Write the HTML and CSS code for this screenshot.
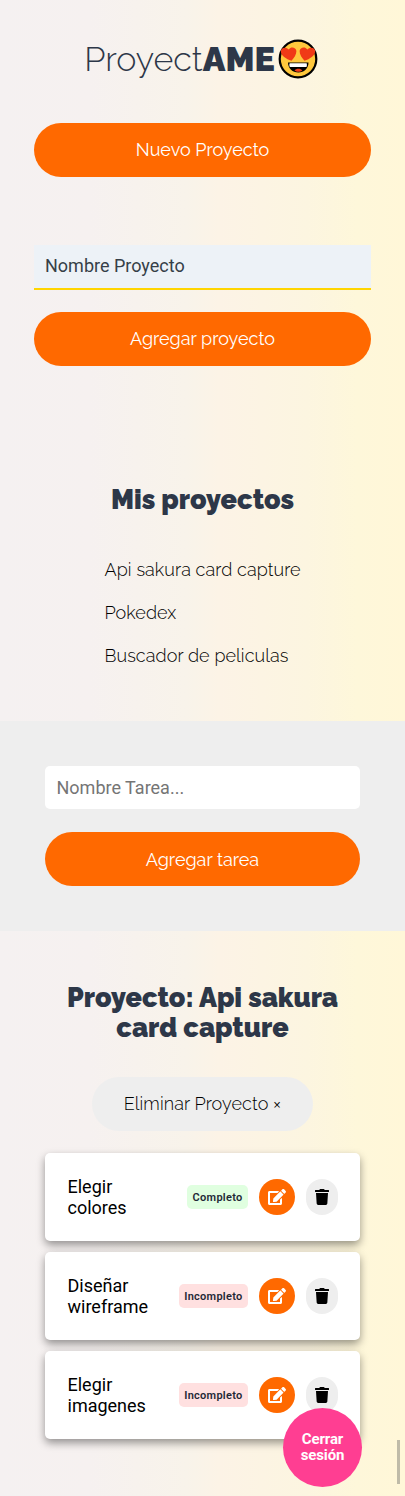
FILE: index.html
```
<!DOCTYPE html>
<html lang="es">
<head>
<meta charset="utf-8">
<title>ProyectAME</title>
<link rel="stylesheet" href="styles.css">
</head>
<body>
<svg class="defs" width="0" height="0" aria-hidden="true">
  <symbol id="edit" viewBox="0 0 576 512"><path d="M402.600 83.200l90.200 90.200c3.800 3.800 3.800 10 0 13.800L274.400 405.600l-92.800 10.300c-12.400 1.400-22.900-9.100-21.500-21.500l10.300-92.800L388.800 83.200c3.800-3.800 10-3.800 13.800 0zm162-22.900l-48.800-48.800c-15.200-15.200-39.900-15.200-55.200 0l-35.400 35.400c-3.800 3.800-3.800 10 0 13.800l90.200 90.200c3.800 3.800 10 3.800 13.800 0l35.400-35.400c15.200-15.300 15.200-40 0-55.200zM384 346.200V448H64V128h229.800c3.200 0 6.200-1.300 8.500-3.500l40-40c7.600-7.600 2.200-20.500-8.500-20.500H48C21.500 64 0 85.500 0 112v352c0 26.500 21.500 48 48 48h352c26.500 0 48-21.500 48-48V306.200c0-10.700-12.900-16-20.500-8.500l-40 40c-2.200 2.300-3.500 5.300-3.500 8.500z"/></symbol>
  <symbol id="trash" viewBox="0 0 448 512"><path d="M432 32H312l-9.400-18.700A24 24 0 0 0 281.100 0H166.800a23.700 23.700 0 0 0-21.400 13.300L136 32H16A16 16 0 0 0 0 48v32a16 16 0 0 0 16 16h416a16 16 0 0 0 16-16V48a16 16 0 0 0-16-16zM32 128l21.200 339a48 48 0 0 0 47.900 45h245.800a48 48 0 0 0 47.900-45L416 128z"/></symbol>
</svg>
<aside class="sidebar">
  <h1 class="logo"><span class="logo-light">Proyect</span><span class="logo-bold">AME</span><svg class="emoji" viewBox="0 0 40 40" aria-hidden="true">
    <circle cx="20" cy="20" r="18.300" fill="#ffc83d" stroke="#000" stroke-width="2.200"/>
    <path d="M13.500 21.800C8 20 3 16.500 2.800 12.500C2.700 8.500 8 7.300 10.600 10.500C13 7 18 8.200 18.400 12C18.500 15.500 16 19 13.500 21.800z" fill="#f03a17"/>
    <path d="M26.500 21.800C32 20 37 16.500 37.200 12.500C37.300 8.500 32 7.300 29.400 10.500C27 7 22 8.200 21.600 12C21.500 15.500 24 19 26.500 21.800z" fill="#f03a17"/>
    <path d="M10 23.500h20.500c0 6-4.500 10-10.200 10S10 29.500 10 23.500z"/>
    <path d="M11.800 24.300h16.700c.5 0 .7 3.800-.4 3.800H12.200c-1 0-1-3.800-.4-3.800z" fill="#fff"/>
    <path d="M16.500 31.500c1.500-2.300 6.300-2.300 7.800 0c-2 1.700-5.800 1.700-7.800 0z" fill="#f03a17"/>
  </svg></h1>
  <button class="btn btn-primary">Nuevo Proyecto</button>
  <form class="new-project">
    <input class="project-input" type="text" placeholder="Nombre Proyecto">
    <button type="button" class="btn btn-primary">Agregar proyecto</button>
  </form>
  <h2 class="title">Mis proyectos</h2>
  <ul class="projects">
    <li>Api sakura card capture</li>
    <li>Pokedex</li>
    <li>Buscador de peliculas</li>
  </ul>
</aside>
<main>
  <section class="task-form">
    <input class="task-input" type="text" placeholder="Nombre Tarea...">
    <button class="btn btn-primary btn-task">Agregar tarea</button>
  </section>
  <section class="tasks">
    <h2 class="title">Proyecto: Api sakura<br>card capture</h2>
    <button class="btn btn-remove">Eliminar Proyecto ×</button>
    <ul class="cards">
      <li class="card"><p>Elegir<br>colores</p><span class="state done">Completo</span><button class="edit"><svg><use href="#edit"/></svg></button><button class="trash"><svg><use href="#trash"/></svg></button></li>
      <li class="card"><p>Diseñar<br>wireframe</p><span class="state">Incompleto</span><button class="edit"><svg><use href="#edit"/></svg></button><button class="trash"><svg><use href="#trash"/></svg></button></li>
      <li class="card"><p>Elegir<br>imagenes</p><span class="state">Incompleto</span><button class="edit"><svg><use href="#edit"/></svg></button><button class="trash"><svg><use href="#trash"/></svg></button></li>
    </ul>
  </section>
</main>
<button class="logout">Cerrar<br>sesión</button>
<div class="scroll-thumb"></div>
</body>
</html>
```
FILE: styles.css
```
* { box-sizing: border-box; margin: 0; padding: 0; }
html { height: 1496px; overflow: hidden; }
body {
  position: relative;
  height: 1496px;
  overflow: hidden;
  font-family: Raleway, Lato, sans-serif;
  font-weight: 300;
  font-size: 18px;
  color: #000;
  background: linear-gradient(to right, #f5f1f1 0%, #f6f1f0 22%, #f8f3ea 46%, #fcf3e6 54%, #fcf5e0 76%, #fef7da 88%, #fff7d8 100%);
}
.defs { position: absolute; }
ul { list-style: none; }
button, input { border: 0; font: inherit; display: block; }
.sidebar { height: 721.400px; padding: 37px 34px 0; }
.logo { display: flex; justify-content: center; align-items: center; height: 44px; padding-right: 3px; font-size: 34px; line-height: 44px; color: #2d3748; }
.logo-light { font-weight: 300; }
.logo-bold { font-weight: 900; }
.emoji { width: 40px; height: 40px; margin-left: 3px; }
.btn { height: 54px; width: 100%; border-radius: 27px; }
.btn-primary { background: #ff6900; color: #fff; font-weight: 400; }
.sidebar .btn { padding-bottom: 1px; }
.sidebar > .btn { margin-top: 42px; }
.new-project { margin-top: 67.500px; display: grid; gap: 22px; }
input { font-family: Roboto, sans-serif; font-weight: 400; width: 100%; padding: 0 11px 2px; }
.project-input { height: 45.500px; background: #edf2f7; border-bottom: 2.500px solid #ffd500; }
.project-input::placeholder { color: #363f48; opacity: 1; }
.title { font-size: 27px; line-height: 30px; font-weight: 900; color: #2d3748; text-align: center; }
.sidebar .title { margin-top: 119px; }
.projects { width: 196px; margin: 33px auto 0; }
.projects li { height: 43px; line-height: 43px; white-space: nowrap; letter-spacing: .090px; }
.task-form { height: 209.500px; background: #eee; padding: 45px; display: grid; grid-template-rows: 43px 54px; gap: 22.500px; }
.task-input { background: #fff; border-radius: 5px; padding: 0 11.500px 0; }
.task-input::placeholder { color: #757575; opacity: 1; }
.btn-task { padding-top: 1px; }
.tasks { padding: 52px 45px 0; }
.btn-remove { width: 221px; margin: 34px auto 22.500px; padding-bottom: 1px; background: #eee; color: #000; letter-spacing: .090px; }
.cards { display: grid; gap: 11.500px; }
.card { display: flex; align-items: center; height: 87.500px; padding: 0 22.500px; background: #fff; border-radius: 5px; box-shadow: 0 4px 9px rgba(0,0,0,.4); font-family: Roboto, sans-serif; font-weight: 400; }
.card p { flex: 1; line-height: 21px; }
.state { height: 24px; line-height: 25px; padding: 0 5.500px; border-radius: 5px; background: #ffe0e0; color: #1f2937; font-size: 11px; font-weight: 600; letter-spacing: .270px; margin-right: 11px; }
.state.done { background: #e0ffe0; }
.edit, .trash { display: flex; align-items: center; justify-content: center; height: 36px; }
.edit { width: 36px; border-radius: 50%; background: #ff6900; fill: #fff; margin-right: 11px; padding-bottom: 1px; }
.edit svg { width: 18px; height: 16px; }
.trash { width: 31.500px; border-radius: 16px; background: #eee; fill: #000; padding-bottom: 1px; }
.trash svg { width: 14px; height: 16px; }
.logout { position: absolute; left: 283px; top: 1408px; width: 79px; height: 79px; padding-bottom: 1px; border-radius: 50%; background: #ff3e92; color: #fff; font: 700 15px/16px Roboto, sans-serif; letter-spacing: -.150px; }
.scroll-thumb { position: absolute; left: 397px; top: 1440px; width: 3px; height: 44px; background: #bfbba8; }
```
